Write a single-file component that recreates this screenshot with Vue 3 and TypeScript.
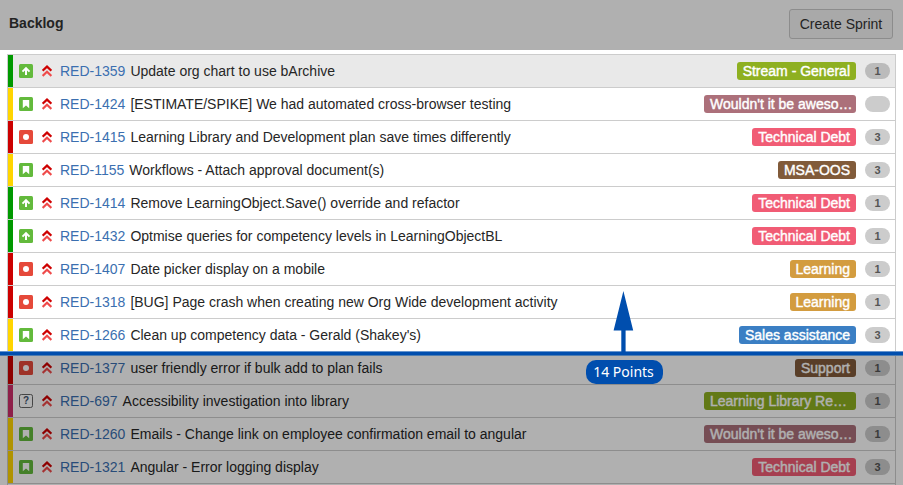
<script setup lang="ts">
type Kind = 'improvement' | 'story' | 'bug' | 'question'

interface Issue {
  key: string
  title: string
  kind: Kind
  stripe: string
  epic: string
  tone: string
  points: string
  selected?: boolean
  clipped?: boolean
}

const issues: Issue[] = [
  { key: 'RED-1359', title: 'Update org chart to use bArchive', kind: 'improvement', stripe: 'green', epic: 'Stream - General', tone: 'lime', points: '1', selected: true },
  { key: 'RED-1424', title: '[ESTIMATE/SPIKE] We had automated cross-browser testing', kind: 'story', stripe: 'yellow', epic: "Wouldn't it be aweso…", tone: 'mauve', points: '', clipped: true },
  { key: 'RED-1415', title: 'Learning Library and Development plan save times differently', kind: 'bug', stripe: 'red', epic: 'Technical Debt', tone: 'pink', points: '3' },
  { key: 'RED-1155', title: 'Workflows - Attach approval document(s)', kind: 'story', stripe: 'yellow', epic: 'MSA-OOS', tone: 'brown', points: '3' },
  { key: 'RED-1414', title: 'Remove LearningObject.Save() override and refactor', kind: 'improvement', stripe: 'green', epic: 'Technical Debt', tone: 'pink', points: '1' },
  { key: 'RED-1432', title: 'Optmise queries for competency levels in LearningObjectBL', kind: 'improvement', stripe: 'green', epic: 'Technical Debt', tone: 'pink', points: '1' },
  { key: 'RED-1407', title: 'Date picker display on a mobile', kind: 'bug', stripe: 'red', epic: 'Learning', tone: 'orange', points: '1' },
  { key: 'RED-1318', title: '[BUG] Page crash when creating new Org Wide development activity', kind: 'bug', stripe: 'red', epic: 'Learning', tone: 'orange', points: '1' },
  { key: 'RED-1266', title: "Clean up competency data - Gerald (Shakey's)", kind: 'story', stripe: 'yellow', epic: 'Sales assistance', tone: 'blue', points: '3' },
  { key: 'RED-1377', title: 'user friendly error if bulk add to plan fails', kind: 'bug', stripe: 'red', epic: 'Support', tone: 'brown', points: '1' },
  { key: 'RED-697', title: 'Accessibility investigation into library', kind: 'question', stripe: 'magenta', epic: 'Learning Library Re…', tone: 'lime', points: '1', clipped: true },
  { key: 'RED-1260', title: 'Emails - Change link on employee confirmation email to angular', kind: 'story', stripe: 'yellow', epic: "Wouldn't it be aweso…", tone: 'mauve', points: '1', clipped: true },
  { key: 'RED-1321', title: 'Angular - Error logging display', kind: 'story', stripe: 'yellow', epic: 'Technical Debt', tone: 'pink', points: '3' },
]
</script>

<template>
  <main class="page">
    <header class="header">
      <h1 class="heading">Backlog</h1>
      <button class="create" type="button">Create Sprint</button>
    </header>

    <ul class="list">
      <li v-for="issue in issues" :key="issue.key" class="row" :class="{ selected: issue.selected }">
        <span class="stripe" :class="`stripe-${issue.stripe}`"></span>
        <svg class="kind" viewBox="0 0 14 14" width="14" height="14">
          <template v-if="issue.kind === 'improvement'">
            <rect width="14" height="14" rx="1.5" fill="#63ba3c" />
            <path d="M7 11V4.2M3.5 7.6L7 4.1l3.5 3.5" fill="none" stroke="#fff" stroke-width="2" />
          </template>
          <template v-else-if="issue.kind === 'story'">
            <rect width="14" height="14" rx="1.5" fill="#63ba3c" />
            <path d="M3.8 3h6.4v8.2L7 8.6l-3.2 2.6z" fill="#fff" />
          </template>
          <template v-else-if="issue.kind === 'bug'">
            <rect width="14" height="14" rx="1.5" fill="#e5493a" />
            <circle cx="7" cy="7" r="3" fill="#fff" />
          </template>
          <template v-else>
            <rect x="0.5" y="0.5" width="13" height="13" rx="1.8" fill="#fff" stroke="#666" />
            <text x="7" y="10.4" text-anchor="middle" font-size="10" font-weight="700" fill="#42526e">?</text>
          </template>
        </svg>
        <svg class="priority" viewBox="0 0 10 12" width="10" height="12">
          <path d="M.6 5.7L5 1.6l4.4 4.1" fill="none" stroke="#ce0000" stroke-width="2.2" />
          <path d="M.6 10.9L5 6.8l4.4 4.1" fill="none" stroke="#ef4b4b" stroke-width="2.2" />
        </svg>
        <a class="key">{{ issue.key }}</a>
        <span class="title">{{ issue.title }}</span>
        <span class="epic" :class="[`epic-${issue.tone}`, { clipped: issue.clipped }]">{{ issue.epic }}</span>
        <span class="points">{{ issue.points }}</span>
      </li>
    </ul>

    <div class="shade"></div>
    <div class="cutoff"></div>
    <svg class="arrow" viewBox="0 0 21 62" width="21" height="62">
      <path d="M10.4 0l9.8 39.6h-7.6V62H8.3V39.6H.6z" fill="#004eae" />
    </svg>
    <div class="total">14 Points</div>
  </main>
</template>

<style>
body {
  background: #fff;
  overflow: hidden;
}
</style>

<style scoped>
.page {
  position: relative;
  box-sizing: border-box;
  width: 903px;
  height: 485px;
  overflow: hidden;
  background: #fff;
  color: #262626;
  font: 14px/20px "Liberation Sans", Arial, sans-serif;
}
.header {
  box-sizing: border-box;
  display: flex;
  align-items: flex-start;
  justify-content: space-between;
  height: 50px;
  padding: 9px 10px 0 9px;
  background: #b0b0b0;
}
.heading {
  margin: 4px 0 0;
  font-size: 14px;
  line-height: 20px;
  color: #232323;
}
.create {
  box-sizing: border-box;
  width: 104px;
  height: 30px;
  padding: 0;
  border: 1px solid #8c8c8c;
  border-radius: 3px;
  background: #a9a9a9;
  color: #232323;
  font: inherit;
}
.list {
  margin: 4px 7px 0;
  padding: 0 0 1px;
  list-style: none;
  border: 1px solid #ccc;
  border-bottom: 0;
}
.row {
  box-sizing: border-box;
  display: flex;
  align-items: center;
  height: 33px;
  padding-right: 5px;
  border-bottom: 1px solid #ccc;
  white-space: nowrap;
}
.selected {
  background: #e9e9e9;
}
.stripe {
  width: 5px;
  align-self: stretch;
}
.stripe-green { background: #090; }
.stripe-yellow { background: #ffd500; }
.stripe-red { background: #c00; }
.stripe-magenta { background: #ce2f6b; }
.kind {
  margin-left: 6px;
}
.priority {
  margin-left: 9px;
}
.key {
  margin-left: 8px;
  color: #3b6fb0;
}
.title {
  flex: 1;
  margin-left: 5px;
}
.epic {
  box-sizing: border-box;
  height: 18px;
  padding: 0 6px;
  border-radius: 3px;
  color: #fff;
  line-height: 18px;
  -webkit-text-stroke: 0.4px #fff;
}
.clipped { width: 152px; }
.epic-lime { background: #8eb021; }
.epic-mauve { background: #ac707a; }
.epic-pink { background: #f15c75; }
.epic-brown { background: #815b3a; }
.epic-orange { background: #d39c3f; }
.epic-blue { background: #3b7fc4; }
.points {
  width: 25px;
  height: 16px;
  margin-left: 9px;
  border-radius: 8px;
  background: #ccc;
  color: #555;
  font-size: 11px;
  font-weight: 700;
  line-height: 16px;
  text-align: center;
}
.selected .points { background: #bbb; }
.shade {
  position: absolute;
  left: 0;
  right: 0;
  top: 354px;
  bottom: 0;
  background: rgba(0, 0, 0, 0.31);
}
.cutoff {
  position: absolute;
  left: 0;
  right: 0;
  top: 351px;
  height: 3px;
  border-top: 1px solid #6695ce;
  border-bottom: 1px solid #4d7cb0;
  background: #004eae;
}
.arrow {
  position: absolute;
  left: 613px;
  top: 291px;
}
.total {
  position: absolute;
  left: 586px;
  top: 360px;
  box-sizing: border-box;
  width: 77px;
  height: 24px;
  padding-right: 2px;
  border-radius: 10px;
  background: #004eae;
  color: #fff;
  font: 14px/23px "Noto Sans", "Open Sans", sans-serif;
  text-align: center;
}
</style>
